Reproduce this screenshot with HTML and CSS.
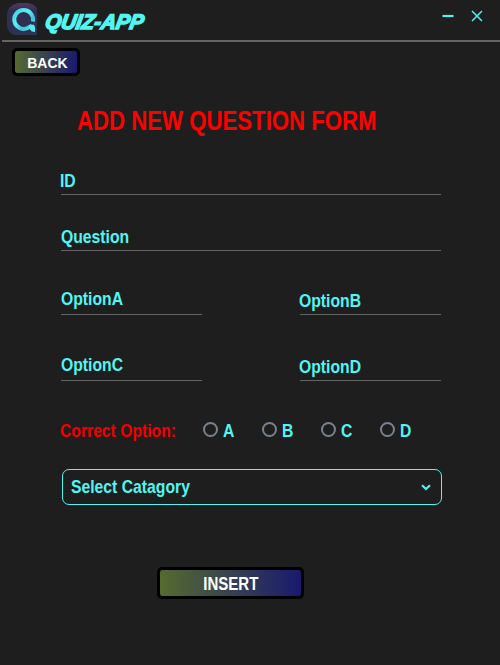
FILE: index.html
```html
<!DOCTYPE html>
<html lang="en">
<head>
<meta charset="utf-8">
<title>Quiz-App</title>
<link rel="stylesheet" href="styles.css">
</head>
<body>
<header class="titlebar">
  <svg class="logo" width="30" height="32" viewBox="0 0 30 32">
    <defs>
      <linearGradient id="plate" x1="0" y1="0" x2="0" y2="1"><stop offset="0" stop-color="#51395f"/><stop offset=".25" stop-color="#302e50"/><stop offset="1" stop-color="#2b3452"/></linearGradient>
      <linearGradient id="ring" x1="0" y1="0" x2="1" y2="1"><stop offset="0" stop-color="#45cfe2"/><stop offset=".4" stop-color="#58f2f5"/><stop offset=".7" stop-color="#42bfdb"/><stop offset="1" stop-color="#58f0f0"/></linearGradient>
    </defs>
    <path d="M11 0H21Q27 1 30 5V32H7Q0 29 0 22V11Q1 2 11 0Z" fill="url(#plate)"/>
    <path d="M25.8 18.5A9.4 9.4 0 1 0 21 24.8L25 22.6" fill="none" stroke="url(#ring)" stroke-width="4"/>
    <path d="M22 22.5L26.5 21.5L28 23.5V29L24.8 28.4L23 26.2Z" fill="#50e9ec"/>
  </svg>
  <h1 class="brand">QUIZ-APP</h1>
  <div class="controls">
    <svg width="12" height="12" viewBox="0 0 12 12"><path d="M0.5 6H11.5" stroke="#52f0f0" stroke-width="2.2"/></svg>
    <svg width="12" height="12" viewBox="0 0 12 12"><path d="M1 1L11 11M11 1L1 11" stroke="#52f0f0" stroke-width="1.5"/></svg>
  </div>
</header>
<main>
  <button class="btn back"><span>BACK</span></button>
  <h2 class="heading">ADD NEW QUESTION FORM</h2>
  <form class="form">
    <div class="field id"><label>ID</label></div>
    <div class="field question"><label>Question</label></div>
    <div class="pair first">
      <div class="field"><label>OptionA</label></div>
      <div class="field right"><label>OptionB</label></div>
    </div>
    <div class="pair second">
      <div class="field"><label>OptionC</label></div>
      <div class="field right"><label>OptionD</label></div>
    </div>
    <div class="correct">
      <span class="caption">Correct Option:</span>
      <label class="radio"><i></i><span>A</span></label>
      <label class="radio"><i></i><span>B</span></label>
      <label class="radio"><i></i><span>C</span></label>
      <label class="radio"><i></i><span>D</span></label>
    </div>
    <div class="select">
      <span>Select Catagory</span>
      <svg width="10" height="7" viewBox="0 0 10 7"><path d="M1 1.2L5 5L9 1.2" fill="none" stroke="#52f0f0" stroke-width="2.2"/></svg>
    </div>
    <button class="btn insert" type="button"><span>INSERT</span></button>
  </form>
</main>
</body>
</html>
```
FILE: styles.css
```css
* { box-sizing: border-box; }
body {
  margin: 0;
  height: 665px;
  overflow: hidden;
  background: #1e1e1e;
  color: #52f5f2;
  font: bold 19px/26px "Liberation Sans", Arial, sans-serif;
}
h1, h2 { margin: 0; }
label, .heading, .caption, .select span, .btn span, .radio span {
  display: block;
  width: max-content;
  white-space: nowrap;
  transform: scaleX(.828);
  transform-origin: 0 50%;
}
.titlebar {
  display: flex;
  height: 42px;
  margin-left: 2px;
  padding: 3px 17px 0 5px;
  border-bottom: 2px solid #646464;
}
.logo { flex: none; }
.brand {
  margin: 6px 0 0 8px;
  font-size: 21px;
  line-height: 26px;
  font-style: italic;
  font-weight: bold;
  white-space: nowrap;
  width: max-content;
  -webkit-text-stroke: 1.5px #52f5f2;
  transform: skewX(-10deg) scaleX(.98);
  transform-origin: 0 50%;
}
.controls { display: flex; gap: 17px; margin: 7px 0 0 auto; }
.btn {
  display: flex;
  justify-content: center;
  align-items: center;
  padding: 0;
  border: 3px solid #000;
  border-radius: 5px;
  background: linear-gradient(90deg, #556b2f, #191970) padding-box;
  color: #fff;
  font: inherit;
}
.btn span { transform-origin: 50% 50%; }
.back { width: 68px; height: 28px; margin: 6px 0 0 12px; font-size: 15.5px; }
.back span { transform: translateY(.5px) scaleX(.9); margin-left: 2px; }
.heading {
  margin: 29px 0 0 77px;
  font-size: 27px;
  line-height: 32px;
  color: #f00;
  transform: scaleX(.822);
}
.form { width: 382px; margin: 31px 0 0 60px; }
.field { height: 27px; margin-left: 1px; border-bottom: 1px solid #646464; }
.id, .question { width: 380px; }
.id label { margin-left: -1px; }
.question { margin-top: 29px; }
.pair { display: flex; justify-content: space-between; width: 380px; margin-left: 1px; }
.pair .field { width: 141px; height: 29px; margin: 0; }
.pair .right { height: 27px; margin-top: 2px; }
.right label { margin-left: -1px; }
.first { margin-top: 35px; }
.second { margin-top: 37px; }
.correct { display: flex; align-items: center; height: 24px; margin-top: 37px; }
.caption { width: 143px; color: #f00000; transform: translateY(1px) scaleX(.826); }
.correct .radio { display: flex; align-items: center; width: 59px; transform: none; }
.radio span { transform: translateY(1px) scaleX(.828); }
.radio i { width: 15px; height: 15px; margin-right: 5px; border: 2px solid #78828e; border-radius: 50%; transform: translateY(-1px); }
.select {
  display: flex;
  justify-content: space-between;
  align-items: center;
  width: 380px;
  height: 36px;
  margin: 27px 0 0 2px;
  padding: 0 10px 0 8px;
  border: 1px solid #52f5f2;
  border-radius: 7px;
}
.insert { width: 147px; height: 32px; margin: 62px 0 0 97px; }
.insert span { transform: translateY(1px) scaleX(.79); }
```
